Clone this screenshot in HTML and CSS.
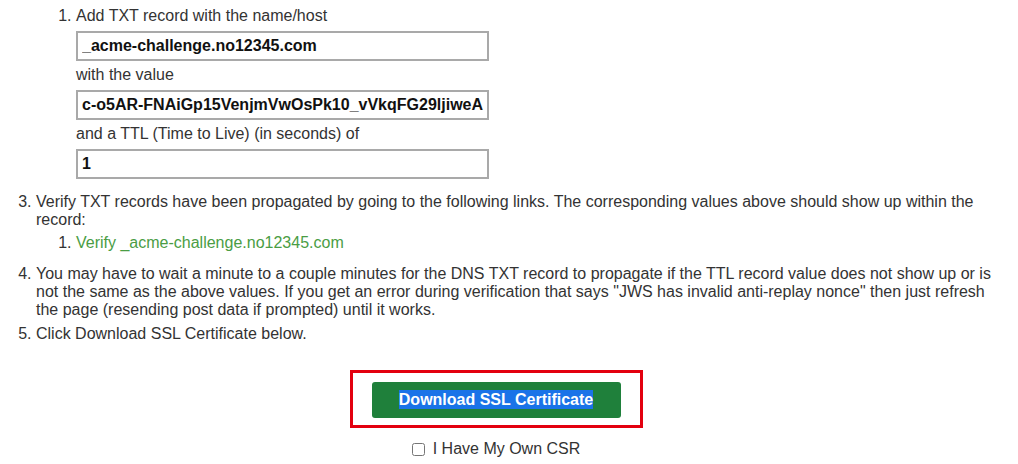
FILE: index.html
```html
<!DOCTYPE html>
<html>
<head>
    <title>SSL Certificate - Verify Domain</title>
    <meta name="viewport" content="width=device-width, initial-scale=1">
    <link rel="stylesheet" href="styles.css">
</head>
<body>
    <div class="page">
        <ol class="steps" start="2">
            <li class="continued">
                <ol class="sub-steps">
                    <li>
                        Add TXT record with the name/host
                        <input class="record-field" type="text" value="_acme-challenge.no12345.com" readonly>
                        with the value
                        <input class="record-field" type="text" value="c-o5AR-FNAiGp15VenjmVwOsPk10_vVkqFG29ljiweA" readonly>
                        and a TTL (Time to Live) (in seconds) of
                        <input class="record-field" type="text" value="1" readonly>
                    </li>
                </ol>
            </li>
            <li>
                Verify TXT records have been propagated by going to the following links. The corresponding values above should show up within the record:
                <ol class="sub-steps links">
                    <li><a href="#">Verify _acme-challenge.no12345.com</a></li>
                </ol>
            </li>
            <li>You may have to wait a minute to a couple minutes for the DNS TXT record to propagate if the TTL record value does not show up or is not the same as the above values. If you get an error during verification that says "JWS has invalid anti-replay nonce" then just refresh the page (resending post data if prompted) until it works.</li>
            <li>Click Download SSL Certificate below.</li>
        </ol>

        <div class="download-section">
            <div class="highlight-box">
                <button class="download-button" type="submit"><span class="selected">Download SSL Certificate</span></button>
            </div>
            <label class="csr-option">
                <input type="checkbox" name="own_csr">
                I Have My Own CSR
            </label>
        </div>
    </div>
</body>
</html>
```

FILE: styles.css
```css
body {
    font-family: "Liberation Sans", Arial, sans-serif;
    font-size: 16px;
    line-height: 18px;
    color: #333;
    background-color: #fff;
    margin: 0;
    padding: 7px 0 0 0;
}
.page {
    width: 1002px;
}
.steps {
    margin: 0;
    padding-left: 36px;
}
.steps > li {
    margin-bottom: 6px;
}
.steps > li.continued {
    list-style-type: none;
    margin-bottom: 14px;
}
.sub-steps {
    margin: 0;
    padding-left: 40px;
}
.sub-steps.links {
    margin: 5px 0 13px 0;
}
.record-field {
    display: block;
    box-sizing: border-box;
    width: 413px;
    height: 30px;
    margin: 6px 0 5px 0;
    padding: 0 1px 0 4px;
    border: 2px solid #a9a9a9;
    font-family: "Liberation Sans", Arial, sans-serif;
    font-size: 16px;
    font-weight: bold;
    color: #111;
    background-color: #fff;
    outline: none;
}
a {
    color: #4a9d44;
    text-decoration: none;
}
a:hover {
    text-decoration: underline;
}
.download-section {
    width: 992px;
    margin-top: 27px;
    display: flex;
    flex-direction: column;
    align-items: center;
}
.highlight-box {
    border: 3px solid #e3000f;
    padding: 9px 19px 7px 19px;
}
.download-button {
    display: block;
    width: 249px;
    height: 36px;
    background-color: #1f803b;
    color: #fff;
    border: none;
    border-radius: 3px;
    font-family: "Liberation Sans", Arial, sans-serif;
    font-size: 16px;
    font-weight: bold;
    cursor: pointer;
    padding: 0;
}
.download-button:hover {
    background-color: #1b7234;
}
.selected {
    background-color: #1a73e8;
    color: #fff;
    padding: 1px 0;
}
.csr-option {
    margin-top: 12px;
    display: flex;
    align-items: center;
    gap: 8px;
    color: #333;
}
.csr-option input {
    margin: 0;
    width: 13px;
    height: 13px;
}
```
